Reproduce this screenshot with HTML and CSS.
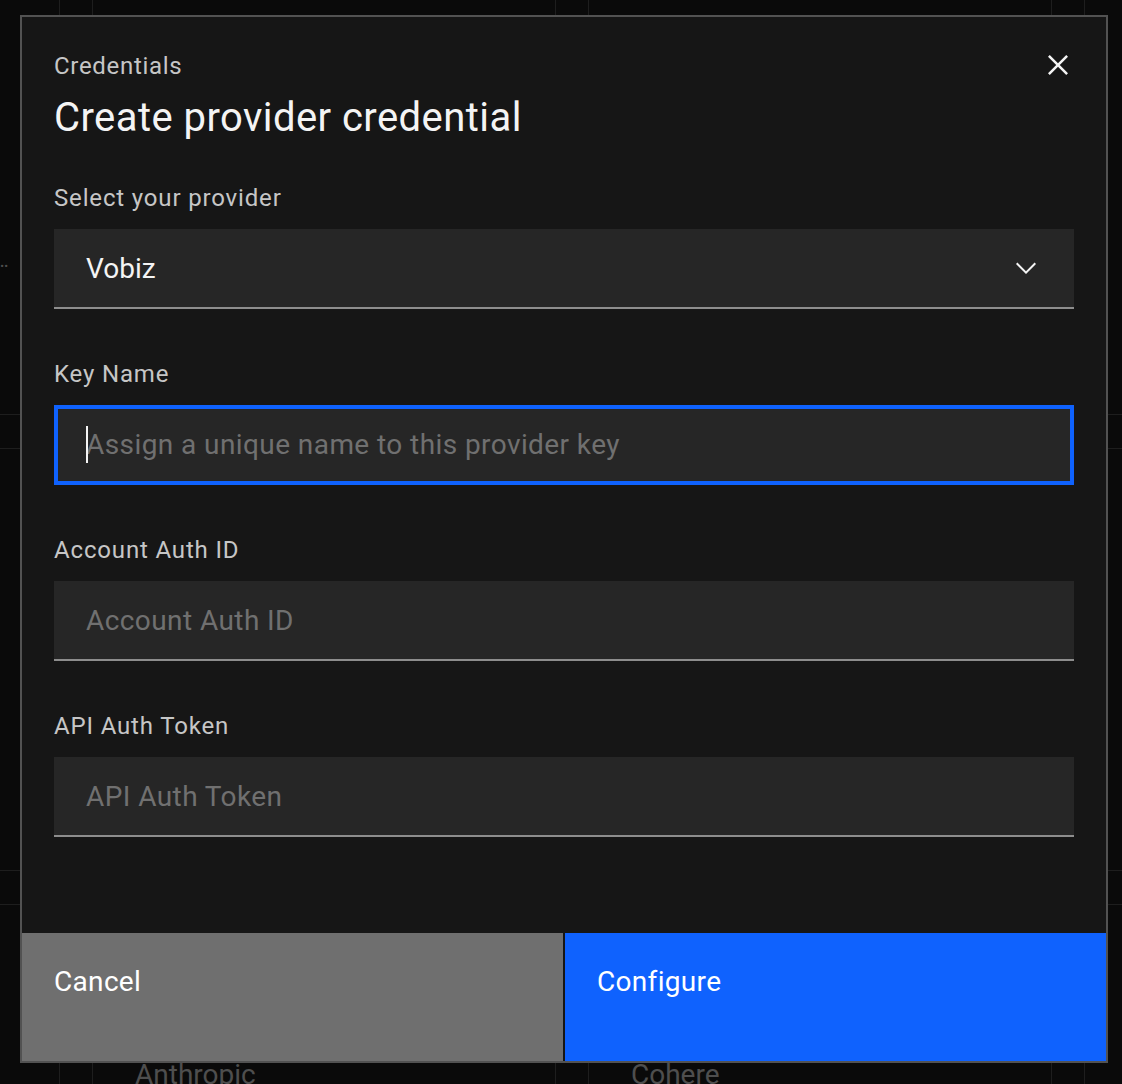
FILE: index.html
```html
<!DOCTYPE html>
<html>
<head>
    <title>Create provider credential</title>
    <link rel="stylesheet" href="styles.css">
</head>
<body>
    <!-- provider catalogue behind the modal -->
    <div class="catalog">
        <div class="tile"><p class="tile-name">Amazon Bedrock</p><p class="tile-desc">Foundation models from leading AI companies via a single API and more</p></div>
        <div class="tile"><p class="tile-name">Azure OpenAI</p><p class="tile-desc">OpenAI models hosted on Microsoft Azure</p></div>
        <div class="tile"><p class="tile-name">Google Vertex</p><p class="tile-desc">Gemini and partner models</p></div>
        <div class="tile"><p class="tile-name">Groq</p><p class="tile-desc">Fast inference</p></div>
        <div class="tile"><p class="tile-name">Mistral</p><p class="tile-desc">Open and commercial models</p></div>
        <div class="tile"><p class="tile-name">OpenAI</p><p class="tile-desc">GPT models</p></div>
        <div class="tile"><p class="tile-name">Ollama</p><p class="tile-desc">Local models</p></div>
        <div class="tile"><p class="tile-name">Plivo</p><p class="tile-desc">Telephony</p></div>
        <div class="tile"><p class="tile-name">Together</p><p class="tile-desc">Open models</p></div>
        <div class="tile"><p class="tile-name">Anthropic</p><p class="tile-desc">Claude models</p></div>
        <div class="tile"><p class="tile-name">Cohere</p><p class="tile-desc">Command models</p></div>
        <div class="tile"><p class="tile-name">Twilio</p><p class="tile-desc">Telephony</p></div>
    </div>

    <div class="modal">
        <header class="modal-header">
            <p class="modal-label">Credentials</p>
            <h2 class="modal-title">Create provider credential</h2>
            <button class="modal-close" type="button" aria-label="Close">
                <svg width="40" height="40" viewBox="0 0 32 32" fill="#f4f4f4"><path d="M17.4141 16L24 9.4141 22.5859 8 16 14.5859 9.4143 8 8 9.4141 14.5859 16 8 22.5859 9.4143 24 16 17.4141 22.5859 24 24 22.5859 17.4141 16z"/></svg>
            </button>
        </header>

        <div class="modal-body">
            <div class="form-item">
                <div class="field-label">Select your provider</div>
                <div class="field select">
                    <span class="value">Vobiz</span>
                    <svg width="32" height="32" viewBox="0 0 16 16" fill="#f4f4f4"><path d="M8 11L3 6 3.7 5.3 8 9.6 12.3 5.3 13 6z"/></svg>
                </div>
            </div>
            <div class="form-item">
                <div class="field-label">Key Name</div>
                <div class="field focused">
                    <span class="placeholder">Assign a unique name to this provider key</span>
                </div>
            </div>
            <div class="form-item">
                <div class="field-label">Account Auth ID</div>
                <div class="field">
                    <span class="placeholder">Account Auth ID</span>
                </div>
            </div>
            <div class="form-item">
                <div class="field-label">API Auth Token</div>
                <div class="field">
                    <span class="placeholder">API Auth Token</span>
                </div>
            </div>
        </div>

        <footer class="modal-footer">
            <button class="btn btn-secondary" type="button">Cancel</button>
            <button class="btn btn-primary" type="button">Configure</button>
        </footer>
    </div>
</body>
</html>
```

FILE: styles.css
```css
body {
    margin: 0;
    height: 1084px;
    overflow: hidden;
    background: #0a0a0a;
    font-family: Roboto, "Liberation Sans", sans-serif;
}

/* background catalogue */
.catalog {
    display: grid;
    grid-template-columns: repeat(4, 464px);
    grid-auto-rows: 423px;
    gap: 33px 32px;
    margin: -8px 0 0 -404px;
}
.tile {
    border: 1px solid #1e1e1e;
    padding: 152px 42px 0 42px;
    overflow: hidden;
}
.tile-name {
    margin: 0;
    height: 36px;
    font-size: 28px;
    line-height: 36px;
    color: #4e4e4e;
}
.tile-desc {
    margin: 65px 0 0 0;
    width: 371px;
    font-size: 20px;
    line-height: 28px;
    color: #4e4e4e;
    white-space: nowrap;
    overflow: hidden;
    text-overflow: ellipsis;
}

/* modal */
.modal {
    position: absolute;
    left: 20px;
    top: 15px;
    width: 1084px;
    height: 1044px;
    border: 2px solid #525252;
    background: #161616;
    display: flex;
    flex-direction: column;
}
.modal-header {
    position: relative;
    padding: 33px 32px 0 32px;
}
.modal-label {
    margin: 0 0 8px 0;
    font-size: 24px;
    line-height: 32px;
    letter-spacing: 0.7px;
    color: #c6c6c6;
}
.modal-title {
    margin: 0;
    font-size: 40px;
    line-height: 56px;
    font-weight: 400;
    letter-spacing: 0.44px;
    color: #f4f4f4;
}
.modal-close {
    position: absolute;
    top: 0;
    right: 0;
    width: 96px;
    height: 96px;
    border: none;
    background: transparent;
    padding: 0;
    display: flex;
    align-items: center;
    justify-content: center;
}

.modal-body {
    padding: 35px 32px 0 32px;
}
.form-item {
    display: flex;
    flex-direction: column;
    margin-bottom: 48px;
}
.field-label {
    font-size: 24px;
    line-height: 32px;
    letter-spacing: 0.84px;
    color: #c6c6c6;
    margin-bottom: 16px;
    padding-top: 1px;
    height: 31px;
}
.field {
    position: relative;
    box-sizing: border-box;
    height: 80px;
    padding: 0 32px;
    border-bottom: 2px solid #8d8d8d;
    background: #262626;
    display: flex;
    align-items: center;
    font-size: 28px;
    letter-spacing: 0.42px;
    color: #f4f4f4;
}
.placeholder {
    color: #707070;
}
.select {
    justify-content: space-between;
}
.select .value {
    letter-spacing: 0;
}
.focused {
    outline: 4px solid #0f62fe;
    outline-offset: -4px;
}
.focused::after {
    content: "";
    position: absolute;
    left: 32px;
    top: 21px;
    width: 2px;
    height: 37px;
    background: #f4f4f4;
}

.modal-footer {
    margin-top: auto;
    height: 128px;
    display: flex;
    gap: 2px;
}
.btn {
    flex: 1;
    border: none;
    margin: 0;
    padding: 31px 32px;
    text-align: left;
    display: flex;
    align-items: flex-start;
    font-family: Roboto, "Liberation Sans", sans-serif;
    font-size: 28px;
    line-height: 36px;
    letter-spacing: 0.32px;
    color: #ffffff;
}
.btn-secondary {
    background: #6f6f6f;
}
.btn-primary {
    background: #0f62fe;
}
```
